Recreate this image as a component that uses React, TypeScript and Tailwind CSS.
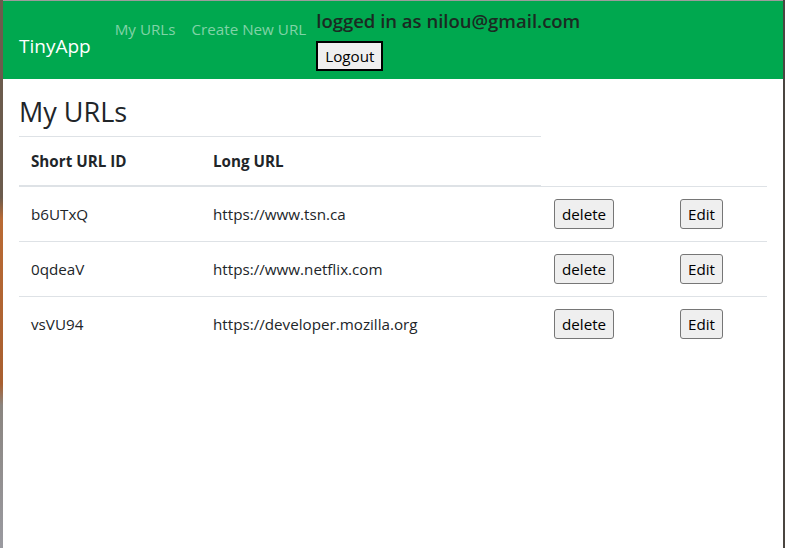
const urls = [
  { id: 'b6UTxQ', long: 'https://www.tsn.ca' },
  { id: '0qdeaV', long: 'https://www.netflix.com' },
  { id: 'vsVU94', long: 'https://developer.mozilla.org' },
];

function Navbar() {
  return (
    <nav className="flex items-start bg-[#00a84f] h-[78px] pl-4 pr-4 pt-2">
      <a className="text-[19px] leading-[30px] text-white mr-4 mt-[22px]">TinyApp</a>
      <div className="flex">
        <a className="px-2 py-2 leading-6 text-[15.2px] text-[#80d3a7]">My URLs</a>
        <a className="px-2 py-2 leading-6 text-[15.2px] text-[#80d3a7]">Create New URL</a>
      </div>
      <div className="flex flex-col items-start ml-[2px]">
        <span className="text-[18.5px] font-semibold leading-6 text-[#1b2a22]">logged in as nilou@gmail.com</span>
        <button className="mt-2 h-[30px] px-[7px] text-[15.2px] leading-5 text-black bg-[#efefef] border-2 border-black">
          Logout
        </button>
      </div>
    </nav>
  );
}

function UrlTable() {
  const th = 'text-left font-bold px-3 py-3 leading-6 border-t border-b-2 border-[#dee2e6]';
  const td = 'px-3 py-3 leading-6 border-t border-[#dee2e6]';
  const btn = 'h-[30px] px-[7px] leading-5 bg-[#efefef] border border-[#767676] rounded-[3px] text-black';
  return (
    <table className="w-full border-collapse text-[15.2px] text-[#212529]">
      <thead>
        <tr>
          <th className={`w-[182px] ${th}`}>Short URL ID</th>
          <th className={`w-[340px] ${th}`}>Long URL</th>
        </tr>
      </thead>
      <tbody>
        {urls.map((u) => (
          <tr key={u.id}>
            <td className={td}>{u.id}</td>
            <td className={td}>{u.long}</td>
            <td className={`w-[126px] pl-[13px] ${td}`}>
              <button className={btn}>delete</button>
            </td>
            <td className={`pl-[13px] ${td}`}>
              <button className={btn}>Edit</button>
            </td>
          </tr>
        ))}
      </tbody>
    </table>
  );
}

export default function App() {
  return (
    <div className="flex w-[785px] h-[548px] overflow-hidden bg-white font-['Open_Sans',sans-serif]">
      <div className="w-[3px] shrink-0 bg-[linear-gradient(to_bottom,#6b5b4d_0%,#6b5b4d_36%,#b96a34_40%,#a85f30_70%,#8a8580_74%,#9a9aa0_100%)]" />
      <div className="flex-1 flex flex-col border-t border-[#9c9c9c]">
        <Navbar />
        <main className="px-4 pt-4">
          <h3 className="text-[27px] font-medium leading-[33px] text-[#212529] mb-2">My URLs</h3>
          <UrlTable />
        </main>
      </div>
      <div className="w-[2px] shrink-0 bg-[#4a4540]" />
    </div>
  );
}
